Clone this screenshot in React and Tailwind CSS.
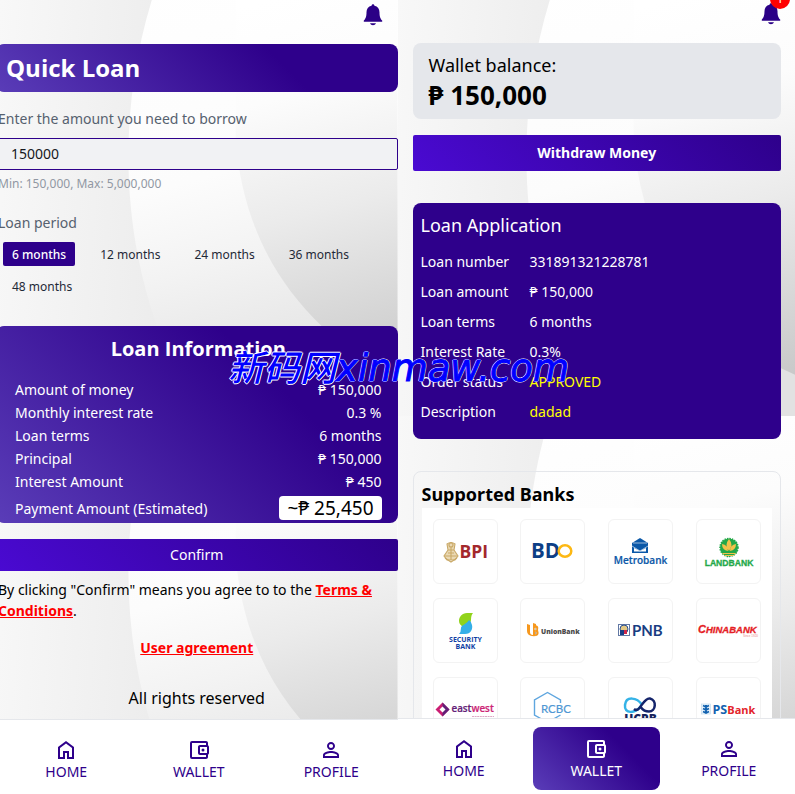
import React, { useId, useState } from "react";
import { MdOutlineAccountBalanceWallet, MdPersonOutline } from "react-icons/md";

function BackdropTile() {
  const id = useId();
  return (
    <svg className="block h-[416px] w-full shrink-0" viewBox="0 0 398 416" preserveAspectRatio="none" aria-hidden="true">
      <defs>
        <linearGradient id={id + "a"} x1="0" y1="0" x2="1" y2="0.15">
          <stop offset="0" stopColor="#f8f8f8" />
          <stop offset="1" stopColor="#ebebeb" />
        </linearGradient>
        <linearGradient id={id + "b"} x1="0.1" y1="0" x2="0.35" y2="1">
          <stop offset="0" stopColor="#ffffff" />
          <stop offset="0.5" stopColor="#fcfcfc" />
          <stop offset="0.7" stopColor="#f3f3f3" />
          <stop offset="1" stopColor="#e2e2e2" />
        </linearGradient>
        <linearGradient id={id + "c"} gradientUnits="userSpaceOnUse" x1="270" y1="0" x2="370" y2="380">
          <stop offset="0" stopColor="#ffffff" />
          <stop offset="0.25" stopColor="#fcfcfc" />
          <stop offset="0.55" stopColor="#ebebeb" />
          <stop offset="1" stopColor="#c9c9c9" />
        </linearGradient>
      </defs>
      <rect width="398" height="416" fill={`url(#${id}b)`} />
      <path d="M0 0H152C120 105 120 220 157 326Q172 375 196 416H0Z" fill={`url(#${id}a)`} />
      <path d="M236 0V140C242 215 270 276 322 326Q358 358 398 375V0Z" fill={`url(#${id}c)`} />
    </svg>
  );
}

function Backdrop() {
  return (
    <div className="absolute inset-0 -z-10 flex flex-col overflow-hidden">
      <BackdropTile />
      <BackdropTile />
    </div>
  );
}

function Bell() {
  return (
    <svg viewBox="0 0 20 22" className="block h-[22px] w-5" fill="#2b0086" aria-hidden="true">
      <path d="M10 0.300c-.8 0-1.400.6-1.400 1.400C5.200 2.400 3.500 4.900 3.500 8.200c0 4.600-1 6.400-2.700 8.400v1.200h18.400v-1.200c-1.700-2-2.700-3.800-2.700-8.400 0-3.300-1.700-5.800-5.100-6.500 0-.8-.6-1.400-1.400-1.400zM7 19.200c.5 1.300 1.700 2 3 2s2.500-.7 3-2z" />
    </svg>
  );
}

function HomeIcon() {
  return (
    <svg viewBox="0 -960 960 960" className="size-6" fill="currentColor" aria-hidden="true">
      <path d="M240-200h120v-240h240v240h120v-360L480-740 240-560v360Zm-80 80v-480l320-240 320 240v480H520v-240h-80v240H160Z" />
    </svg>
  );
}

const tabs = [
  { label: "HOME", Icon: HomeIcon },
  { label: "WALLET", Icon: MdOutlineAccountBalanceWallet },
  { label: "PROFILE", Icon: MdPersonOutline },
];

function NavBar({ active, className = "" }) {
  return (
    <nav className={"grid shrink-0 grid-cols-3 border-t border-gray-200 bg-white " + className}>
      {tabs.map(({ label, Icon }) => (
        <div key={label} className="px-[3px]">
          <button
            className={
              "flex h-[63px] w-full flex-col items-center justify-center rounded-lg text-[14px] leading-[20px] " +
              (active === label
                ? "bg-[linear-gradient(45deg,#5a3db8,#2e008b_70%)] text-white"
                : "text-[#2e008b]")
            }
          >
            <Icon className="size-6" />
            {label}
          </button>
        </div>
      ))}
    </nav>
  );
}

const months = [6, 12, 24, 36, 48];

const summary = [
  ["Amount of money", "₱ 150,000"],
  ["Monthly interest rate", "0.3 %"],
  ["Loan terms", "6 months"],
  ["Principal", "₱ 150,000"],
  ["Interest Amount", "₱ 450"],
];

function LoanScreen() {
  const [amount, setAmount] = useState("150000");
  return (
    <section className="relative isolate flex h-screen flex-col overflow-hidden">
      <Backdrop />
      <main className="-ml-1 min-h-0 flex-1 overflow-hidden">
        <header className="flex h-11 items-start justify-end pt-1 pr-[15px]">
          <button aria-label="Notifications"><Bell /></button>
        </header>
        <h1 className="flex h-12 items-center rounded-lg bg-[linear-gradient(45deg,#5a3db8,#2e008b_70%)] px-[10px] font-['Open_Sans',sans-serif] text-[24px] font-bold text-white">
          Quick Loan
        </h1>
        <div className="pl-[2px]">
          <label htmlFor="amount" className="mt-4 block text-[14px] leading-[22px] text-[#56616f]">
            Enter the amount you need to borrow
          </label>
        </div>
        <input
          id="amount"
          value={amount}
          onChange={(e) => setAmount(e.target.value)}
          className="mt-2 block h-8 w-full rounded-[2px] border border-[#2e008b] bg-[#f1f2f4] px-[14px] pb-px text-[14px] text-[#15181d] outline-none"
        />
        <div className="pl-[2px]">
          <p className="mt-1 text-[12px] leading-[20px] text-[#9198a3]">Min: 150,000, Max: 5,000,000</p>
          <p className="mt-[18px] text-[14px] leading-[22px] text-[#56616f]">Loan period</p>
        </div>
        <div className="mt-2 flex flex-wrap gap-x-4 gap-y-2 pl-[7px]">
          {months.map((m) => (
            <button
              key={m}
              className={
                "h-6 rounded-[2px] px-[9px] pt-px text-[12px] " +
                (m === 6 ? "bg-[#2e008b] font-medium text-white" : "text-[#1f2937]")
              }
            >
              {m} months
            </button>
          ))}
        </div>
        <div className="mt-7 h-[197px] rounded-lg bg-[linear-gradient(45deg,#5a3db8,#2e008b_70%)] pr-4 pl-[19px] text-white">
          <h2 className="pt-2 pb-[15px] text-center font-['Open_Sans',sans-serif] text-[20px] leading-[29px] font-bold">Loan Information</h2>
          <dl className="text-[14px] leading-[23px]">
            {summary.map(([k, v]) => (
              <div key={k} className="flex justify-between">
                <dt>{k}</dt>
                <dd>{v}</dd>
              </div>
            ))}
            <div className="mt-[3px] flex items-center justify-between">
              <dt>Payment Amount (Estimated)</dt>
              <dd className="rounded bg-white px-2 text-[19px] leading-6 text-black">~₱ 25,450</dd>
            </div>
          </dl>
        </div>
        <button className="mt-4 block h-8 w-full rounded-[2px] bg-[linear-gradient(45deg,#4a0ad2,#2e008b)] pb-[2px] text-[14px] text-white">
          Confirm
        </button>
        <p className="mt-2 pl-[2px] text-[14px] leading-[21px] text-black">
          By clicking "Confirm" means you agree to to the{" "}
          <a href="#terms" className="font-bold text-[#ff0000] underline">Terms &amp; Conditions</a>.
        </p>
        <p className="mt-4 text-center text-[14px] leading-[21px]">
          <a href="#agreement" className="font-bold text-[#ff0000] underline">User agreement</a>
        </p>
        <p className="mt-7 text-center text-[16px] leading-6 text-black">All rights reserved</p>
      </main>
      <NavBar className="h-[75px] pt-2" />
    </section>
  );
}

const application = [
  ["Loan number", "331891321228781"],
  ["Loan amount", "₱ 150,000"],
  ["Loan terms", "6 months"],
  ["Interest Rate", "0.3%"],
  ["Order status", "APPROVED", true],
  ["Description", "dadad", true],
];

function BankLogo({ name, children }) {
  return (
    <button aria-label={name} className="size-[65px] overflow-hidden rounded-md border border-[#f3f3f3] bg-white">
      <svg viewBox="0 0 63 63" className="block size-full">{children}</svg>
    </button>
  );
}

function Banks() {
  return (
    <div className="grid grid-cols-4 justify-items-center gap-y-[14px] bg-white pt-[11px]">
      <BankLogo name="BPI">
        <g stroke="#c9a968" strokeWidth="1.100" fill="#ead9b4">
          <path d="M13 24q4-3 8 0l-1 6h-6zM14 30l-4 6 3 4h8l3-4-4-6z" />
          <path d="M11 36h12M14 33h6M17 22v18M11 38l6 4 6-4" fill="none" />
          <circle cx="17" cy="25" r="2" />
        </g>
        <text x="25.500" y="38" fontSize="17.500" fontWeight="700" fill="#a3282c" className="font-['Open_Sans']">BPI</text>
      </BankLogo>
      <BankLogo name="BDO">
        <text x="10" y="38" fontSize="20.500" fontWeight="700" fill="#0d3f86" className="font-['Open_Sans']">BD</text>
        <ellipse cx="44" cy="31" rx="6.300" ry="5.700" fill="none" stroke="#fdb813" strokeWidth="2.500" />
      </BankLogo>
      <BankLogo name="Metrobank">
        <path d="M23 23l8-5 8 5v10H23z" fill="#0b58a8" />
        <path d="M23 26l8 5 8-5M24 23h14" stroke="#fff" strokeWidth=".6" fill="none" />
        <path d="M25 28v3.500h12V28l-6 3z" fill="#fff" />
        <text x="31.500" y="43.500" textAnchor="middle" fontSize="10" fontWeight="600" fill="#0b58a8" stroke="#0b58a8" strokeWidth=".2" className="font-['Open_Sans']">Metrobank</text>
      </BankLogo>
      <BankLogo name="Landbank">
        <circle cx="32" cy="27.500" r="9" fill="#23a849" stroke="#23a849" strokeWidth="1.500" strokeDasharray="1.500 1" />
        <g fill="#f2c14a">
          <path d="M32 19q5 6 0 12q-5-6 0-12M25 24q6 1 6 7q-6-1-6-7M39 24q-6 1-6 7q6-1 6-7" />
          <path d="M25 33h14l-3 3h-8z" />
        </g>
        <path d="M27 34.500h10" stroke="#23a849" />
        <text x="32" y="45.500" textAnchor="middle" fontSize="8.600" fontWeight="800" fill="#23a849" stroke="#23a849" strokeWidth=".3" className="font-['Liberation_Sans']">LANDBANK</text>
      </BankLogo>
      <BankLogo name="Security Bank">
        <path d="M39 14H33c-5 0-8 4-8 8q0 4 5 6q7-3 7-7q0-5 2-7z" fill="#91d31c" />
        <path d="M25 35h6c6 0 8-5 7-9q-1-4-3-5c-2 4-8 5-8 8q0 4-2 6z" fill="#35afe8" />
        <text x="31.500" y="43" textAnchor="middle" fontSize="7" fontWeight="700" fill="#123fa5" className="font-['Open_Sans']">SECURITY</text>
        <text x="31.500" y="49.500" textAnchor="middle" fontSize="7" fontWeight="700" fill="#123fa5" className="font-['Open_Sans']">BANK</text>
      </BankLogo>
      <BankLogo name="UnionBank">
        <path d="M6 25l3 1v7q0 3 3 3V24l3 1v12q-9 1-9-5zM12.500 26.500q6-1 4.500 4.500q2 6-3 6" fill="#f6981e" />
        <path d="M14 29l1.500 1-1.500 1zM14 33l1.500 1-1.500 1" stroke="#fff" strokeWidth=".7" />
        <text x="20" y="34.500" fontSize="6.800" fontWeight="800" fill="#4b4b4b" className="font-['Open_Sans']">UnionBank</text>
      </BankLogo>
      <BankLogo name="PNB">
        <rect x="9.500" y="25.500" width="11" height="11" fill="#fff" stroke="#6278a4" />
        <circle cx="15" cy="30" r="4" fill="#e3c884" stroke="#274f91" />
        <path d="M11 31h4v5h-4z" fill="#173f87" />
        <path d="M15 31h3v4h-3z" fill="#cf294b" />
        <text x="23" y="37" fontSize="15" fontWeight="700" fill="#193d82" className="font-['Lato']">PNB</text>
      </BankLogo>
      <BankLogo name="Chinabank">
        <text x="1" y="34" fontSize="11" fontWeight="800" fontStyle="italic" fill="#e51d25" stroke="#e51d25" strokeWidth=".3" className="font-['Liberation_Sans']">
          C<tspan fontSize="9.500">HINABANK</tspan>
        </text>
        <text x="46" y="38" fontSize="3" fill="#e88888" className="font-['Liberation_Sans']">Since 1920</text>
      </BankLogo>
      <BankLogo name="EastWest">
        <path d="M8.500 24.500l7 7-7 7-7-7z" fill="#cb1e73" />
        <path d="M8.500 24.500l7 7-7 7z" fill="#622078" />
        <path d="M8.500 28.500l3 3-3 3-3-3z" fill="#fff" />
        <text x="17.500" y="34" fontSize="9.800" fontWeight="600" fill="#632077" stroke="#632077" strokeWidth=".2" className="font-['Open_Sans']">east<tspan fill="#cc2475" stroke="#cc2475">west</tspan></text>
        <path d="M38 38.500h22" stroke="#dcaac6" strokeDasharray="2 .6" />
      </BankLogo>
      <BankLogo name="RCBC">
        <path d="M39.500 25v-3L26.500 14.500 13.500 22v15l13 7.500 13-7.500" fill="none" stroke="#5fa6df" strokeWidth="1.400" />
        <text x="20" y="34.500" fontSize="11.500" fill="#4f97d3" stroke="#4f97d3" strokeWidth=".2" className="font-['Lato']">RCBC</text>
      </BankLogo>
      <BankLogo name="UCPB">
        <path d="M33 27C28 19 17 18 16 27s10 9 16 1" fill="none" stroke="#35b3e7" strokeWidth="2.500" />
        <path d="M25 31C31 36 34 19 41 20.500s6 13-1 13q-5 0-8-4" fill="none" stroke="#15256b" strokeWidth="2.500" />
        <text x="31.500" y="45" textAnchor="middle" fontSize="12" fontWeight="800" fill="#16235c" className="font-['Open_Sans']">UCPB</text>
      </BankLogo>
      <BankLogo name="PSBank">
        <rect x="4.500" y="26" width="9" height="10" fill="#edf5fb" stroke="#b9d5ec" strokeWidth=".6" />
        <path d="M6 27.500l3 1.500 3-1.500M6 30.500l3 1.500 3-1.500M6 33.500l3 1.500 3-1.500M9 27v8.500" stroke="#1262b0" strokeWidth="1.800" fill="none" />
        <text x="15.500" y="35.500" fontSize="12.500" fontWeight="700" fill="#1262b0" className="font-['Open_Sans']">PS<tspan fill="#e3252b" fontSize="11">Bank</tspan></text>
      </BankLogo>
    </div>
  );
}

function WalletScreen() {
  return (
    <section className="relative isolate flex h-screen flex-col overflow-hidden">
      <Backdrop />
      <main className="min-h-0 flex-1 overflow-hidden pr-[14px] pl-[15px]">
        <header className="flex h-[43px] items-start justify-end pt-[3px]">
          <button aria-label="Notifications, 1 unread" className="relative">
            <Bell />
            <span className="absolute -top-[14px] left-[9px] flex size-5 items-center justify-center rounded-full bg-[#ff0000] text-[12px] text-white">1</span>
          </button>
        </header>
        <div className="h-[76px] rounded-lg bg-[#e5e7eb] px-4 pt-2 text-black">
          <p className="text-[18px] leading-7">Wallet balance:</p>
          <p className="text-[26px] leading-8 font-bold">₱ 150,000</p>
        </div>
        <button className="mt-4 block h-9 w-full rounded-[2px] bg-[linear-gradient(45deg,#4a0ad2,#2e008b)] pb-[2px] text-[14px] font-bold text-white">
          Withdraw Money
        </button>
        <div className="mt-8 h-[236px] rounded-lg bg-[#2e008b] px-2 pt-2 text-white">
          <h2 className="text-[18px] leading-7">Loan Application</h2>
          <table className="mt-2 text-[14px] leading-[30px]">
            <tbody>
              {application.map(([k, v, highlight]) => (
                <tr key={k}>
                  <th scope="row" className="w-[109px] p-0 text-left font-normal">{k}</th>
                  <td className={highlight ? "p-0 text-[#ffff00]" : "p-0"}>{v}</td>
                </tr>
              ))}
            </tbody>
          </table>
        </div>
        <div className="mt-8 rounded-lg border border-[#e5e7eb] px-2 pt-2">
          <h2 className="text-[18px] leading-7 font-bold text-black">Supported Banks</h2>
          <Banks />
        </div>
      </main>
      <NavBar active="WALLET" className="h-[76px] pt-2" />
    </section>
  );
}

export default function App() {
  return (
    <div className="relative grid grid-cols-2 overflow-hidden font-['Noto_Sans','Open_Sans',sans-serif]">
      <LoanScreen />
      <WalletScreen />
      <p className="pointer-events-none absolute top-[344px] left-[228px] text-[36px] leading-[42px] whitespace-nowrap text-[#0000ff] italic [text-shadow:1px_0_#fff,-1px_0_#fff,0_1px_#fff,0_-1px_#fff]">
        <span className="font-['Noto_Sans_CJK_SC',sans-serif] font-medium">新码网</span>
        <span className="font-['DejaVu_Sans',sans-serif] text-[37px] [-webkit-text-stroke:1px_#00f]">xinmaw.com</span>
      </p>
    </div>
  );
}
